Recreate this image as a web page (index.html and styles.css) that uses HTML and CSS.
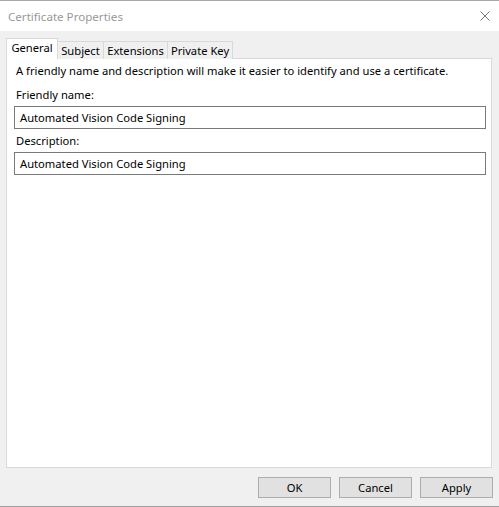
FILE: index.html
```html
<!DOCTYPE html>
<html lang="en">
<head>
  <meta charset="UTF-8" />
  <title>Certificate Properties</title>
  <link rel="stylesheet" href="styles.css">
</head>
<body>

  <div class="window">
    <div class="titlebar">
      <span class="title">Certificate Properties</span>
      <svg class="close" width="10" height="10" viewBox="0 0 10 10">
        <path d="M0.5 0.5 L9.5 9.5 M9.5 0.5 L0.5 9.5" stroke="#777" stroke-width="1" fill="none"/>
      </svg>
    </div>

    <div class="body">
      <div class="tabs">
        <div class="tab active">General</div>
        <div class="tab">Subject</div>
        <div class="tab">Extensions</div>
        <div class="tab">Private Key</div>
      </div>

      <div class="panel">
        <p class="intro">A friendly name and description will make it easier to identify and use a certificate.</p>

        <label class="field-label">Friendly name:</label>
        <div class="field">Automated Vision Code Signing</div>

        <label class="field-label">Description:</label>
        <div class="field">Automated Vision Code Signing</div>
      </div>

      <div class="buttons">
        <button class="btn">OK</button>
        <button class="btn">Cancel</button>
        <button class="btn">Apply</button>
      </div>
    </div>
  </div>

</body>
</html>
```

FILE: styles.css
```css
/* ---------------- GENERAL ---------------- */
body, html {
  margin: 0;
  height: 100%;
  background: #f0f0f0;
  font-family: 'Noto Sans', 'Open Sans', sans-serif;
  font-size: 11.2px;
  color: #000;
  overflow: hidden;
}

.window {
  height: 506px;
  border-bottom: 1px solid #a0a0a0;
  display: flex;
  flex-direction: column;
}

/* ---------------- TITLE BAR ---------------- */
.titlebar {
  height: 30px;
  border-top: 1px solid #aaaaaa;
  background: #ffffff;
  display: flex;
  align-items: center;
  justify-content: space-between;
  padding: 0 9px 0 8px;
}

.title {
  color: #999999;
  font-size: 11.6px;
}

/* ---------------- TABS ---------------- */
.body {
  flex: 1;
  padding: 7px 6px 0 6px;
  display: flex;
  flex-direction: column;
}

.tabs {
  display: flex;
  align-items: flex-end;
  height: 21px;
  margin-bottom: -1px;
  position: relative;
  z-index: 1;
}

.tab {
  height: 18px;
  line-height: 18px;
  border: 1px solid #d9d9d9;
  border-bottom: none;
  border-left: none;
  background: #f0f0f0;
  white-space: nowrap;
  text-align: center;
  box-sizing: border-box;
}

.tab:nth-child(2) { width: 46px; }
.tab:nth-child(3) { width: 64px; }
.tab:nth-child(4) { width: 65px; }

.tab.active {
  width: 52px;
  height: 21px;
  line-height: 18px;
  background: #ffffff;
  border-left: 1px solid #d9d9d9;
}

/* ---------------- PANEL ---------------- */
.panel {
  width: 484px;
  height: 404px;
  background: #ffffff;
  border: 1px solid #d9d9d9;
  padding: 4px 0 0 0;
  box-sizing: content-box;
}

.intro {
  margin: 0 0 8px 9px;
  line-height: 16px;
}

.field-label {
  display: block;
  margin-left: 9px;
  line-height: 16px;
  margin-bottom: 3px;
}

.field {
  width: 465px;
  height: 21px;
  line-height: 21px;
  margin: 0 0 4px 7px;
  border: 1px solid #7a7a7a;
  padding-left: 5px;
}

/* ---------------- BUTTONS ---------------- */
.buttons {
  display: flex;
  justify-content: flex-end;
  gap: 8px;
  margin-top: 9px;
}

.btn {
  width: 73px;
  height: 21px;
  background: #e1e1e1;
  border: 1px solid #adadad;
  font-family: inherit;
  font-size: 11.2px;
  color: #000;
  padding: 0;
}
```
